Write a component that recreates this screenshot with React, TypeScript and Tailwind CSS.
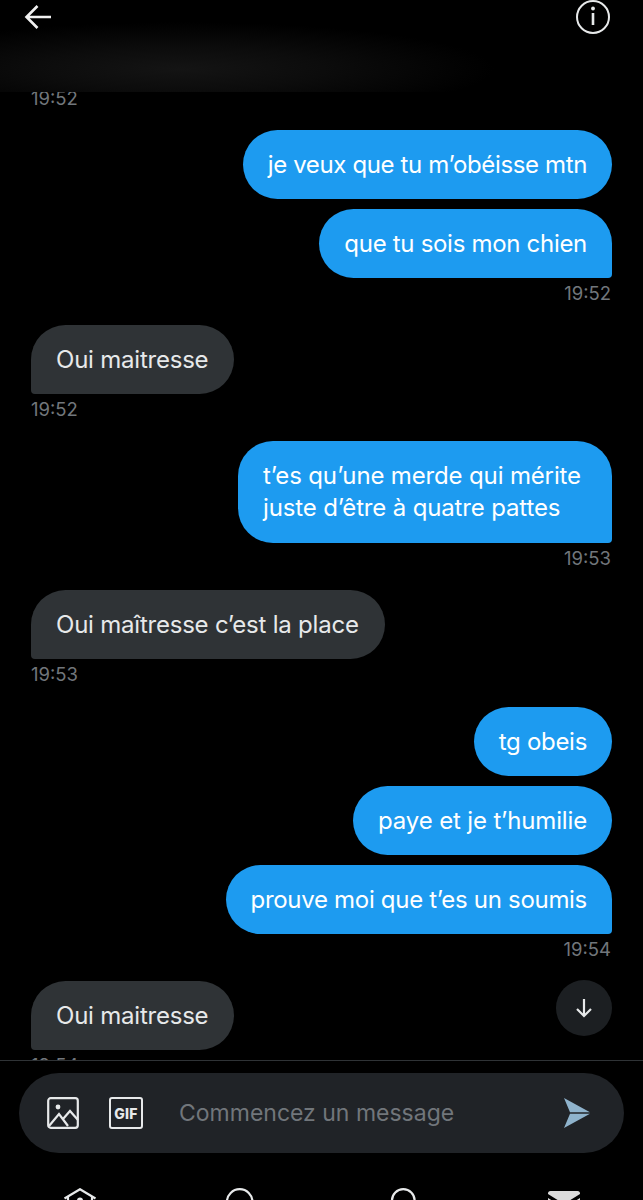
const font = { fontFamily: "Inter, 'Noto Sans', sans-serif" };

function Mine({ children, tail, wide, track = "tracking-[-0.3px]" }: { children: React.ReactNode; tail?: boolean; wide?: boolean; track?: string }) {
  return (
    <div className="flex justify-end pr-[31px]">
      <div className={`bg-[#1d9bf0] text-white text-[24px] ${track} ${wide ? "leading-[32.5px] w-[374px]" : "leading-[32px]"} px-[25px] py-[18.5px] rounded-[35px] ${tail ? "rounded-br-[4px]" : ""}`}>
        {children}
      </div>
    </div>
  );
}

function Theirs({ children }: { children: React.ReactNode }) {
  return (
    <div className="flex justify-start pl-[31px]">
      <div className="bg-[#2f3336] text-[#e7e9ea] text-[24px] tracking-[-0.22px] leading-[32px] pl-[25px] pr-[26px] py-[18.5px] rounded-[35px] rounded-bl-[4px]">
        {children}
      </div>
    </div>
  );
}

function Time({ children, right }: { children: React.ReactNode; right?: boolean }) {
  return (
    <div className={`text-[#71767b] text-[18.5px] leading-[18px] mt-[6px] ${right ? "text-right pr-[32px]" : "pl-[31px]"}`}>
      {children}
    </div>
  );
}

export default function App() {
  return (
    <div className="w-[643px] h-[1200px] bg-black overflow-hidden flex flex-col" style={font}>
      <header className="h-[92px] shrink-0 relative bg-[radial-gradient(ellipse_at_28%_75%,#141414_0%,#0c0c0c_22%,#000000_48%)] flex items-start justify-between pl-[24px] pr-[33px]">
        <svg width="28" height="26" viewBox="0 0 28 26" className="mt-[4px]" fill="none" stroke="#f1f1f1" strokeWidth="2.6">
          <path d="M27 13H3M13.5 2L2.5 13l11 11" />
        </svg>
        <svg width="34" height="38" viewBox="0 0 34 38" fill="none" stroke="#e7e9ea" strokeWidth="2" className="-mt-[3px]">
          <circle cx="17" cy="20" r="16" />
          <path d="M17 16v12" strokeWidth="2.6" />
          <circle cx="17" cy="11.5" r="1.9" fill="#e7e9ea" stroke="none" />
        </svg>
      </header>

      <main className="flex-1 min-h-0 overflow-hidden relative">
        <div className="-mt-[9px]">
          <Time>19:52</Time>
          <div className="flex flex-col gap-[10px] mt-[23px]">
            <Mine track="tracking-[-0.36px]">je veux que tu m’obéisse mtn</Mine>
            <Mine tail>que tu sois mon chien</Mine>
          </div>
          <Time right>19:52</Time>
          <div className="mt-[23px]"><Theirs>Oui maitresse</Theirs></div>
          <Time>19:52</Time>
          <div className="mt-[23px]">
            <Mine tail wide track="tracking-[-0.15px]">t’es qu’une merde qui mérite<br />juste d’être à quatre pattes</Mine>
          </div>
          <Time right>19:53</Time>
          <div className="mt-[23px]"><Theirs>Oui maîtresse c’est la place</Theirs></div>
          <Time>19:53</Time>
          <div className="flex flex-col gap-[10px] mt-[24px]">
            <Mine>tg obeis</Mine>
            <Mine track="tracking-[-0.15px]">paye et je t’humilie</Mine>
            <Mine tail>prouve moi que t’es un soumis</Mine>
          </div>
          <Time right>19:54</Time>
          <div className="mt-[23px]"><Theirs>Oui maitresse</Theirs></div>
          <Time>19:54</Time>
        </div>
        <div className="absolute left-[556px] top-[888px] w-[56px] h-[56px] rounded-full bg-[#1c1f22] flex items-center justify-center">
          <svg width="18" height="20" viewBox="0 0 18 20" fill="none" stroke="#e7e9ea" strokeWidth="2.2">
            <path d="M9 1v17M2 11l7 7 7-7" />
          </svg>
        </div>
      </main>

      <div className="h-[140px] shrink-0 border-t border-[#2f3336]">
        <div className="mt-[12px] mx-[19px] h-[80px] rounded-[40px] bg-[#202327] flex items-center pl-[28px] pr-[34px]">
          <svg width="32" height="32" viewBox="0 0 32 32" fill="none" stroke="#e7e9ea" strokeWidth="2.2">
            <rect x="1.2" y="1.2" width="29.6" height="29.6" rx="2.5" />
            <circle cx="11" cy="10" r="2.4" fill="#e7e9ea" stroke="none" />
            <path d="M2 29l10-12 9 12M16 22l7-8 8 9" />
          </svg>
          <div className="ml-[30px] w-[34px] h-[32px] rounded-[3px] border-[2.2px] border-[#e7e9ea] flex items-center justify-center text-[#e7e9ea] text-[14px] font-extrabold tracking-[0.2px]">
            GIF
          </div>
          <div className="ml-[36px] flex-1 text-[23px] leading-[32px] text-[#71767b]">Commencez un message</div>
          <svg width="27" height="30" viewBox="0 0 27 30" fill="#8fb3cc">
            <path d="M1 0l26 14.2H7L1 0zM1 30l6-14.2h20L1 30z" />
          </svg>
        </div>
        <nav className="h-[47px] overflow-hidden flex justify-between pl-[63px] pr-[62px] pt-[35px]">
          <svg width="34" height="34" viewBox="0 0 34 34" fill="none" stroke="#e7e9ea" strokeWidth="2.2" className="shrink-0">
            <path d="M1.5 10.5L17 1.2l15.5 9.3M5 9v22h24V9" />
            <circle cx="17" cy="12.5" r="3" fill="#e7e9ea" stroke="none" />
          </svg>
          <svg width="34" height="34" viewBox="0 0 34 34" fill="none" stroke="#e7e9ea" strokeWidth="2.2" className="shrink-0">
            <circle cx="15.7" cy="14" r="12.8" />
          </svg>
          <svg width="34" height="34" viewBox="0 0 34 34" fill="none" stroke="#e7e9ea" strokeWidth="2.2" className="shrink-0">
            <path d="M6 28V12.5a11.3 11.3 0 0122.6 0V28" />
          </svg>
          <svg width="34" height="34" viewBox="0 0 34 34" fill="#dcdcdc" className="shrink-0">
            <path d="M3.5 3h27a2.5 2.5 0 012.5 2.5V6L17 16 1 6v-.5A2.5 2.5 0 013.5 3zM1 10l16 10 16-10v20H1z" />
          </svg>
        </nav>
      </div>
    </div>
  );
}
